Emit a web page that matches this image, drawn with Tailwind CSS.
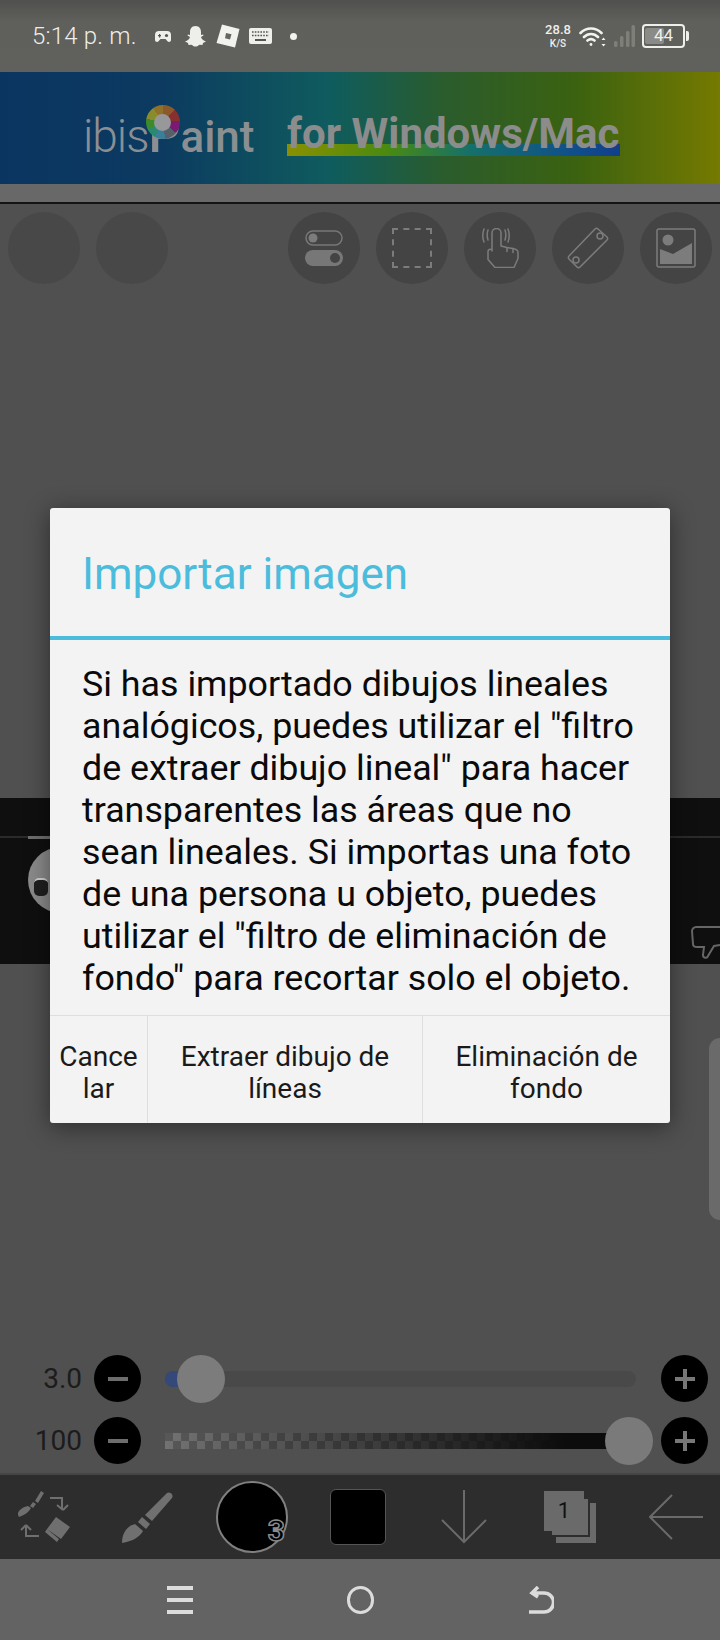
<!DOCTYPE html>
<html lang="es">
<head>
    <meta charset="UTF-8">
    <meta name="viewport" content="width=device-width, initial-scale=1.0">
    <title>Importar imagen</title>
    <script src="https://cdn.jsdelivr.net/npm/@tailwindcss/browser@4"></script>
</head>
<body class="bg-[#505050] font-[Roboto,sans-serif]">
    <div class="relative w-[720px] h-[1640px] overflow-hidden flex flex-col">

        <!-- status bar -->
        <div class="h-[72px] shrink-0 flex items-center pl-[32px] text-[#eeeeea] bg-[linear-gradient(to_bottom,#50504e,#5f5f5b_30%,#60605c)]">
            <span class="text-[24px] w-[123px] tracking-[0.2px] font-light">5:14 p. m.</span>
            <svg class="w-[16px] h-[13px]" viewBox="0 0 16 13" fill="#eeeeea"><path d="M4 1h8a4 4 0 0 1 4 4v5a2 2 0 0 1-3.500 1.300L10.500 9h-5L3.500 11.300A2 2 0 0 1 0 10V5a4 4 0 0 1 4-4z"/><path d="M3 5h3v1.300H3zM4 4h1.200v3.400H4z" fill="#55554f"/><circle cx="11.500" cy="5.500" r="1.600" fill="#55554f"/></svg>
            <svg class="ml-[14px] w-[21px] h-[21px]" viewBox="0 0 21 21" fill="#eeeeea"><path d="M10.500 0c4 0 5.500 3 5.500 6v3l2-.5.5 1-2.500 1.500c.5 2 2.500 3.500 5 4.500l-3 1.500-.5 2-3-.3c-1 .8-2.500 1.800-4 1.800s-3-1-4-1.800l-3 .3-.5-2L0 15.500c2.500-1 4.500-2.500 5-4.500L2.500 9.500l.5-1 2 .5V6c0-3 1.500-6 5.500-6z"/></svg>
            <svg class="ml-[10px] w-[24px] h-[24px]" viewBox="0 0 24 24"><path d="M6 0.500L23.500 5 19 23.500 0.500 19z" fill="#f2f2ee"/><path d="M10 9l5.500 1.300L14 15.500 9 14.300z" fill="#66665f"/></svg>
            <svg class="ml-[9px] w-[23px] h-[16px]" viewBox="0 0 23 16"><rect width="23" height="16" rx="2" fill="#eeeeea"/><path d="M3 4h17M3 7.500h17" stroke="#55554f" stroke-width="1.600" stroke-dasharray="1.600 1.200"/><path d="M6 12h11" stroke="#55554f" stroke-width="2"/></svg>
            <span class="ml-[18px] w-[7px] h-[7px] rounded-full bg-[#f2f2ee]"></span>
            <div class="ml-auto w-[30px] flex flex-col items-center leading-none font-medium">
                <span class="text-[13px] leading-[15px]">28.8</span>
                <span class="text-[10px] leading-[12px] mt-[1px]">K/S</span>
            </div>
            <svg class="ml-[6px] w-[27px] h-[21px]" viewBox="0 0 27 21" fill="none" stroke="#f2f2ee" stroke-width="2.600" stroke-linecap="round"><path d="M1.500 7c6-6 15-6 21 0M5 11c4-4 10-4 14 0M8.500 14.500c2-1.600 5-1.600 7 0"/><circle cx="12" cy="18.500" r="1.400" fill="#f2f2ee" stroke="none"/><path d="M24.500 11.500l2 2.500h-4zM24.500 20.500l2-2.500h-4z" fill="#f2f2ee" stroke="none"/></svg>
            <svg class="ml-[8px] w-[21px] h-[22px]" viewBox="0 0 21 22" fill="#7f7f7a"><rect x="0" y="16" width="3.500" height="6" rx="1.500"/><rect x="6" y="11" width="3.500" height="11" rx="1.500"/><rect x="12" y="6" width="3.500" height="16" rx="1.500"/><rect x="17.500" y="0" width="3.500" height="22" rx="1.500"/></svg>
            <div class="ml-[7px] w-[43px] h-[24px] rounded-[4px] border-2 border-[#eeeeea] relative flex items-center justify-center">
                <span class="absolute left-[1px] top-[2px] bottom-[2px] w-[19px] rounded-[2px] bg-[#8a8a86]"></span>
                <span class="relative text-[17px]">44</span>
            </div>
            <span class="ml-[1px] mr-[31px] w-[3px] h-[10px] rounded-r-[2px] bg-[#eeeeea]"></span>
        </div>

        <!-- ad banner -->
        <div class="h-[112px] shrink-0 relative flex items-center pl-[83px] text-[#8b8f92] bg-[linear-gradient(to_right,#0a3560,#0c3a60_22%,#0f5c5e_46%,#2b5c2c_62%,#3b6210_80%,#757a00)]">
            <div class="flex items-baseline w-[172px] shrink-0 h-[56px] mt-[14px]">
                <span class="text-[46px] leading-[56px] font-light tracking-[-1px]">ibis</span>
                <span class="relative inline-block text-[50px] leading-[56px] font-medium">P<span class="absolute left-[-3px] top-[-2px] w-[34px] h-[34px] rounded-full flex items-center justify-center bg-[conic-gradient(#8a5a2a_0_12%,#86302f_12%_24%,#7a1a70_24%_36%,#55606a_36%_48%,#3a7f9a_48%_58%,#2a8a70_58%_68%,#3d8a2a_68%_78%,#8a8c2a_78%_90%,#90702a_90%)]"><span class="w-[17px] h-[17px] rounded-full bg-[#96989a]"></span></span></span>
                <span class="text-[44px] leading-[56px] font-medium">aint</span>
            </div>
            <div class="ml-[32px] relative mt-[12px]">
                <span class="absolute left-0 right-0 top-[33px] h-[12px] bg-[linear-gradient(to_right,#8a9000,#4a8a10_30%,#15706a_55%,#10508a_85%,#123f8a)]"></span>
                <span class="relative text-[42px] font-bold leading-[46px] text-[#8c8c8c] block w-[333px] whitespace-nowrap">for Windows/Mac</span>
            </div>
        </div>
        <div class="h-[18px] shrink-0 bg-[#686868]"></div>
        <div class="h-[2px] shrink-0 bg-[#141414]"></div>

        <!-- canvas area -->
        <div class="flex-1 flex flex-col bg-[#505050]">
            <div class="flex justify-between px-2 pt-2">
                <div class="flex gap-4">
                    <span class="w-[72px] h-[72px] rounded-full bg-[#484848]"></span>
                    <span class="w-[72px] h-[72px] rounded-full bg-[#484848]"></span>
                </div>
                <div class="flex gap-4">
                    <span class="w-[72px] h-[72px] rounded-full bg-[#444] flex items-center justify-center">
                        <svg class="w-[38px] h-[36px]" viewBox="0 0 38 36"><rect x="1" y="1" width="36" height="14" rx="7" fill="none" stroke="#777" stroke-width="1.500"/><circle cx="8" cy="8" r="4.500" fill="#7c7c7c"/><rect y="20" width="38" height="16" rx="8" fill="#777"/><circle cx="30" cy="28" r="5" fill="#444"/></svg>
                    </span>
                    <span class="w-[72px] h-[72px] rounded-full bg-[#444] flex items-center justify-center">
                        <span class="block w-[40px] h-[40px] border-2 border-dashed border-[#7c7c7c]"></span>
                    </span>
                    <span class="w-[72px] h-[72px] rounded-full bg-[#444] flex items-center justify-center">
                        <svg class="w-[38px] h-[40px]" viewBox="0 0 38 40" fill="none" stroke="#7c7c7c" stroke-width="1.500" stroke-linejoin="round" stroke-linecap="round"><path d="M11 23V5a4.500 4.500 0 0 1 9 0v13l6 1.500 6 1c3 .5 5 2 5 4v6l-4 9H14l-7-8v-8c0-2 2-3 4-1.500z"/><path d="M26 19.500v4M32 20.500v4M7 2c-1 3-1 7 0 10M3 1c-1.500 4-1.500 9 0 13M24 2c1 3 1 7 0 10M27 1c1.500 4 1.500 9 0 13"/></svg>
                    </span>
                    <span class="w-[72px] h-[72px] rounded-full bg-[#444] flex items-center justify-center">
                        <svg class="w-[42px] h-[42px]" viewBox="0 0 42 42" fill="none" stroke="#7c7c7c" stroke-width="1.500"><path d="M31 2l9 8a2 2 0 0 1 0 3L13 40a2 2 0 0 1-3 0l-8-8a2 2 0 0 1 0-3L28 2a2 2 0 0 1 3 0z"/><circle cx="33" cy="9" r="3"/><circle cx="9" cy="33" r="3"/></svg>
                    </span>
                    <span class="w-[72px] h-[72px] rounded-full bg-[#444] flex items-center justify-center">
                        <svg class="w-[40px] h-[40px]" viewBox="0 0 40 40"><rect x="1" y="1" width="38" height="38" rx="2" fill="none" stroke="#7c7c7c" stroke-width="1.500"/><circle cx="12" cy="12" r="5.500" fill="#7c7c7c"/><path d="M4 36V21l13 5 19-11v21z" fill="#7c7c7c"/></svg>
                    </span>
                </div>
            </div>

            <!-- dark video strip behind the dialog -->
            <div class="relative mt-[514px] h-[166px] bg-[#0f0f0f] pt-[38px]">
                <div class="h-[2px] bg-[#2a2a2a]"></div>
                <span class="absolute left-[28px] top-[38px] w-[24px] h-[3px] bg-[#6e6e6e]"></span>
                <span class="absolute left-[28px] top-[49px] w-[66px] h-[66px] rounded-full bg-[#8a8a8a] flex items-center pl-[6px] pt-[14px]">
                    <span class="w-[14px] h-[18px] rounded-[5px] bg-[#1f1f1f] border-t-2 border-[#cfcfcf]"></span>
                </span>
                <svg class="absolute left-[691px] top-[128px] w-[29px] h-[34px]" viewBox="0 0 29 34" fill="none" stroke="#666" stroke-width="2"><path d="M1 5c0-2 2-4 4-4h24M1 5l1 13c0 2 2 3 4 3h7l-1 8c0 3 4 4 5 1l6-10 6-1"/></svg>
            </div>

            <!-- sliders -->
            <div class="mt-auto pb-[9px] flex flex-col gap-[15px]">
                <div class="flex items-center h-[47px]">
                    <span class="w-[82px] text-right text-[28px] text-[#1c1c1c]">3.0</span>
                    <span class="ml-[12px] w-[47px] h-[47px] rounded-full bg-black flex items-center justify-center"><span class="w-[20px] h-[4px] bg-[#6d6d6d]"></span></span>
                    <div class="relative ml-[24px] w-[471px] h-[16px] rounded-full bg-[#494949]">
                        <span class="absolute left-0 top-0 h-[16px] w-[20px] rounded-l-full bg-[#34497a]"></span>
                        <span class="absolute left-[12px] -top-[16px] w-[48px] h-[48px] rounded-full bg-[#7c7c7c]"></span>
                    </div>
                    <span class="ml-[25px] w-[47px] h-[47px] rounded-full bg-black relative flex items-center justify-center"><span class="w-[20px] h-[4px] bg-[#777]"></span><span class="absolute w-[4px] h-[20px] bg-[#777]"></span></span>
                </div>
                <div class="flex items-center h-[47px]">
                    <span class="w-[82px] text-right text-[28px] text-[#1c1c1c]">100</span>
                    <span class="ml-[12px] w-[47px] h-[47px] rounded-full bg-black flex items-center justify-center"><span class="w-[20px] h-[4px] bg-[#6d6d6d]"></span></span>
                    <div class="relative ml-[24px] w-[471px] h-[16px] bg-[linear-gradient(to_right,transparent,#0c0c0c_85%),repeating-conic-gradient(#727272_0_25%,#585858_0_50%)] bg-size-[auto,16px_16px]">
                        <span class="absolute left-[440px] -top-[16px] w-[48px] h-[48px] rounded-full bg-[#7a7a7a]"></span>
                    </div>
                    <span class="ml-[25px] w-[47px] h-[47px] rounded-full bg-black relative flex items-center justify-center"><span class="w-[20px] h-[4px] bg-[#777]"></span><span class="absolute w-[4px] h-[20px] bg-[#777]"></span></span>
                </div>
            </div>
        </div>

        <!-- bottom tools -->
        <div class="h-[86px] shrink-0 bg-[#2d2d2d] border-t-2 border-[#454545] flex items-center pl-[18px]">
            <svg class="w-[52px] h-[52px]" viewBox="0 0 52 52" fill="#6f6f6f"><path d="M23 0l3 2-6 10-3-2zM15 11l3 2-3 4-3-2zM10 15l3 2c-2 4-6 7-12 9-1-1-1-3-1-4 1-3 5-6 10-7z"/><path d="M38 26l14 10-9 12-14-10zM27 41l2-3 12 10-2 3z"/><path d="M32 7h12v11M45 19l-6-5M45 19l5-5" fill="none" stroke="#6f6f6f" stroke-width="2"/><path d="M21 45H8V35M8 34l-5 5M8 34l5 5" fill="none" stroke="#6f6f6f" stroke-width="2"/></svg>
            <svg class="ml-[52px] w-[53px] h-[52px]" viewBox="0 0 53 52" fill="#707070"><path d="M45 2c3-2 7 2 5 5L30 30l-7-6z"/><path d="M20 26l8 7-4 5-8-7z"/><path d="M13 33l8 7c-4 7-11 10-21 12 0-8 3-16 13-19z"/></svg>
            <div class="relative ml-[41px] w-[72px] h-[72px] rounded-full bg-black border-2 border-[#808080]">
                <span class="absolute right-[1px] bottom-[5px] text-[30px] leading-[30px] text-black font-bold [-webkit-text-stroke:1.5px_#8a8a8a]">3</span>
            </div>
            <span class="ml-[42px] w-[56px] h-[56px] rounded-[6px] bg-black border border-[#555]"></span>
            <svg class="ml-[55px] w-[46px] h-[54px]" viewBox="0 0 46 54" fill="none" stroke="#6a6a6a" stroke-width="2"><path d="M23 0v52M1 30l22 22 22-22"/></svg>
            <div class="relative ml-[57px] w-[52px] h-[52px]">
                <span class="absolute left-[12px] top-[12px] w-[40px] h-[40px] bg-[#6a6a6a]"></span>
                <span class="absolute left-[6px] top-[6px] w-[40px] h-[40px] bg-[#6a6a6a] border-[2px] border-[#2d2d2d]"></span>
                <span class="absolute left-0 top-0 w-[40px] h-[40px] bg-[#6a6a6a] text-[22px] leading-[40px] text-center text-[#111]">1</span>
            </div>
            <svg class="ml-[53px] w-[54px] h-[46px]" viewBox="0 0 54 46" fill="none" stroke="#6a6a6a" stroke-width="2"><path d="M54 23H2M23 1L1 23l22 22"/></svg>
        </div>

        <!-- nav bar -->
        <div class="h-[81px] shrink-0 bg-[#636363] flex items-center justify-center gap-[154px]">
            <div class="w-[26px] h-[28px] flex flex-col justify-between">
                <span class="h-[4px] bg-[#dcdcdc]"></span>
                <span class="h-[4px] bg-[#dcdcdc]"></span>
                <span class="h-[4px] bg-[#dcdcdc]"></span>
            </div>
            <span class="w-[27px] h-[28px] rounded-full border-[3px] border-[#dcdcdc]"></span>
            <svg class="w-[26px] h-[28px]" viewBox="0 0 26 28" fill="none" stroke="#dcdcdc" stroke-width="3.500"><path d="M10 1L4 7l6 4M4 7h12a8.500 8.500 0 0 1 0 19H1"/></svg>
        </div>

        <!-- side handle -->
        <span class="absolute right-0 top-[1038px] w-[11px] h-[182px] rounded-l-[12px] bg-[#6a6a6a]"></span>

        <!-- dialog -->
        <div class="absolute left-[50px] top-[508px] w-[620px] h-[615px] bg-[#f3f3f4] rounded-[3px] shadow-[0_4px_24px_rgba(0,0,0,0.45)] flex flex-col">
            <div class="h-[132px] shrink-0 px-[32px] pt-[42px] border-b-4 border-[#4bbcdc] text-[44px] leading-[48px] text-[#4bbcdc]">Importar imagen</div>
            <p class="h-[375px] shrink-0 px-[32px] pt-[23px] text-[35.8px] leading-[42px] text-[#0a0a0a] whitespace-nowrap">Si has importado dibujos lineales<br>analógicos, puedes utilizar el "filtro<br>de extraer dibujo lineal" para hacer<br>transparentes las áreas que no<br>sean lineales. Si importas una foto<br>de una persona u objeto, puedes<br>utilizar el "filtro de eliminación de<br>fondo" para recortar solo el objeto.</p>
            <div class="flex-1 flex border-t border-[#dedede] text-[28px] leading-[32px] text-[#1a1a1a] text-center">
                <div class="w-[98px] border-r border-[#dedede] flex items-center justify-center pt-[6px]">Cance<br>lar</div>
                <div class="w-[275px] border-r border-[#dedede] flex items-center justify-center pt-[6px]">Extraer dibujo de<br>líneas</div>
                <div class="flex-1 flex items-center justify-center pt-[6px]">Eliminación de<br>fondo</div>
            </div>
        </div>
    </div>
</body>
</html>
